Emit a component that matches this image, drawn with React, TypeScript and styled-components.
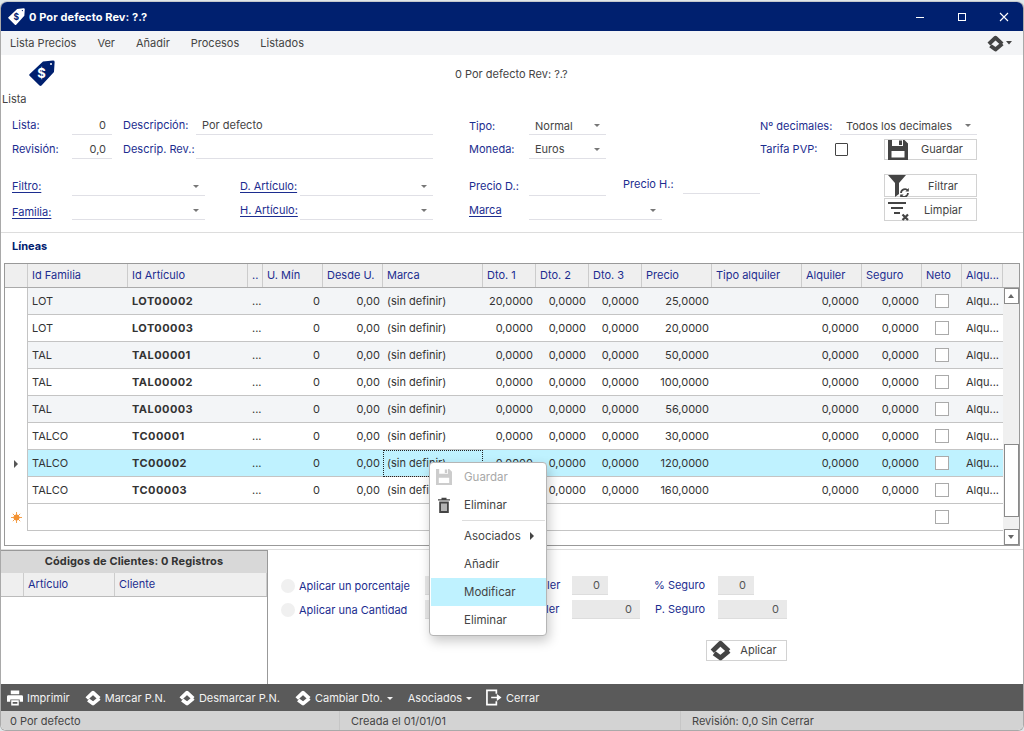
import React from "react";
import styled, { createGlobalStyle } from "styled-components";

const Global = createGlobalStyle`
  html, body { margin: 0; padding: 0; background: #dfe7ea; }
  body { font-family: Inter, "Liberation Sans", sans-serif; font-size: 11px; color: #444; overflow: hidden; }
  * { box-sizing: border-box; }
`;

const NAVY = "#00206f";
const LINK = "#1c2d8f";

const Win = styled.div`
  margin-top: 1px; width: 1024px; height: 730px; display: flex; flex-direction: column;
  background: #fff; border: 1px solid #a9a9a9; border-top: 1px solid #c4c8cc; border-radius: 7px 7px 6px 6px; overflow: hidden; position: relative;
`;
const TitleBar = styled.div`
  height: 29px; flex: none; background: ${NAVY}; color: #fff; display: flex; align-items: center; padding-left: 7px;
`;
const TitleText = styled.div`font-weight: 700; font-size: 11px; margin-left: 4px; letter-spacing: .1px; flex: 1;`;
const WinBtns = styled.div`display: flex; align-items: center; gap: 26px; padding-right: 11px;`;
const MenuBar = styled.div`
  height: 24px; flex: none; background: #f3f4f6; display: flex; align-items: center; padding: 0 11px 0 9px; gap: 21px; color: #444;
`;
const MenuLogo = styled.div`margin-left: auto; display: flex; align-items: center; gap: 2px; color: #444;`;
const Head = styled.div`height: 52px; flex: none; display: flex;`;
const HeadLeft = styled.div`width: 454px; padding-left: 1px;`;
const HeadIcon = styled.div`margin: 5px 0 6px 27px; height: 26px; line-height: 0;`;
const HeadText = styled.div`margin-top: 12px; line-height: 14px;`;
const FormWrap = styled.div`
  height: 126px; flex: none; display: flex; padding: 4px 0 0 11px; border-bottom: 1px solid #ddd;
`;
const Col = styled.div<{ $w: number }>`width: ${p => p.$w}px; flex: none; display: flex; flex-direction: column;`;
const Row = styled.div<{ $gap?: number; $h?: number; $dy?: number }>`
  height: ${p => p.$h ?? 24}px; display: flex; align-items: flex-end; margin-top: ${p => p.$gap ?? 0}px;
  --dy: ${p => p.$dy ?? 0}px;
  --lh: ${p => (p.$dy ? 19 : 20)}px;
`;
const Label = styled.div<{ $w: number; $ml?: number; $up?: number }>`
  width: ${p => p.$w}px; margin-left: ${p => p.$ml ?? 0}px; height: 20px; line-height: var(--lh, 20px); flex: none; color: ${LINK}; white-space: nowrap;
  margin-bottom: ${p => p.$up ?? 0}px; padding-top: var(--dy, 0);
`;
const LinkText = styled.span`text-decoration: underline; text-underline-offset: 2px;`;
const Input = styled.div<{ $w: number; $right?: boolean; $up?: number }>`
  width: ${p => p.$w}px; height: 20px; line-height: 19px; flex: none; border-bottom: 1px solid #e0e0e6; padding: var(--dy, 0) 6px 0;
  text-align: ${p => (p.$right ? "right" : "left")}; margin-bottom: ${p => p.$up ?? 0}px; color: #444;
`;
const Combo = styled(Input)`position: relative; padding-right: 16px;`;
const Caret = styled.span`
  position: absolute; right: 6px; top: 9px; width: 0; height: 0; border-left: 3px solid transparent; border-right: 3px solid transparent; border-top: 3px solid #777;
`;
const Check = styled.span`display: block; width: 13px; height: 13px; border: 1px solid #444; margin: 0 0 4px 0; border-radius: 1px; flex: none;`;
const Btn = styled.div<{ $w: number; $ml?: number; $h?: number }>`
  width: ${p => p.$w}px; height: ${p => p.$h ?? 23}px; margin-left: ${p => p.$ml ?? 0}px; border: 1px solid #d2d2d2; display: flex; align-items: center; flex: none;
  padding-left: 3px; color: #444; background: #fff; svg { flex: none; }
  span { flex: 1; text-align: center; padding-bottom: ${p => (p.$h ? 1 : 0)}px; }
`;
const BtnStack = styled.div`margin: 14px 0 0 124px; display: flex; flex-direction: column; gap: 1px;`;
const SectionHead = styled.div`height: 30px; flex: none; padding: 6px 0 0 11px; font-weight: 700; color: ${NAVY}; line-height: 14px;`;
const GridBox = styled.div`
  margin: 0 3px; flex: none; height: 283px; border: 1px solid #999; display: flex; flex-direction: column;
`;
const COLS = "23px 100px 120px 15px 60px 60px 100px 53px 53px 53px 70px 90px 60px 60px 40px 41px";
const GridHead = styled.div`
  height: 24px; flex: none; display: grid; grid-template-columns: ${COLS} 1fr; background: #efefef; border-bottom: 1px solid #aaa;
`;
const HCell = styled.div`border-right: 1px solid #ccc; padding: 0 0 0 4px; line-height: 22px; color: ${LINK}; white-space: nowrap; overflow: hidden;`;
const HEnd = styled.div``;
const GridBody = styled.div`flex: 1; display: flex; min-height: 0;`;
const Table = styled.div`width: 998px; flex: none;`;
const TRow = styled.div`display: grid; grid-template-columns: ${COLS}; height: 27px;`;
const Ind = styled.div`border-right: 1px solid #c4c4c4; display: flex; align-items: center; justify-content: center; padding-left: 0;`;
const Arrow = styled.span`width: 0; height: 0; border-top: 4px solid transparent; border-bottom: 4px solid transparent; border-left: 4px solid #555; margin-left: 0;`;
const Cell = styled.div<{ $bg: string; $right?: boolean; $bold?: boolean; $focus?: boolean; $center?: boolean }>`
  background: ${p => p.$bg}; border-bottom: 1px solid #c4c4c4; padding: 0 ${p => (p.$right ? 3 : 4)}px 0 4px; line-height: 26px; color: #333; white-space: nowrap; overflow: hidden;
  text-align: ${p => (p.$right ? "right" : "left")}; font-weight: ${p => (p.$bold ? 700 : 400)}; letter-spacing: ${p => (p.$bold ? ".45px" : "0")};
  ${p => p.$focus ? "outline: 1px dotted #222; outline-offset: -1px;" : ""}
  ${p => p.$center ? "display: flex; align-items: center; justify-content: center;" : ""}
`;
const CellBox = styled.span`display: block; width: 14px; height: 14px; border: 1px solid #aaa; background: #fff;`;
const Scroll = styled.div`flex: 1; background: #f0f0f0; display: flex; flex-direction: column; align-items: center; padding: 0 0 0 0;`;
const SBtn = styled.div`width: 15px; height: 16px; border: 1px solid #8a8a8a; background: #fff; display: flex; align-items: center; justify-content: center; flex: none;`;
const STri = styled.span<{ $down?: boolean }>`
  width: 0; height: 0; border-left: 3px solid transparent; border-right: 3px solid transparent;
  ${p => p.$down ? "border-top: 4px solid #666;" : "border-bottom: 4px solid #666;"}
`;
const Thumb = styled.div`width: 15px; height: 73px; border: 1px solid #8a8a8a; background: #fff; margin-top: 140px; flex: none;`;
const SpacerEnd = styled.div`flex: 1;`;
const Bottom = styled.div`
  margin-top: 3px; height: 135px; flex: none; border-top: 1px solid #ddd; display: flex;
`;
const ClientPanel = styled.div`width: 267px; flex: none; border-right: 1px solid #999; border-top: 1px solid #999; display: flex; flex-direction: column;`;
const ClientTitle = styled.div`height: 22px; flex: none; background: #d8d8d8; text-align: center; line-height: 21px; font-weight: 700; color: #333; letter-spacing: .12px;`;
const ClientHead = styled.div`height: 24px; flex: none; background: #efefef; border-bottom: 1px solid #bbb; display: grid; grid-template-columns: 23px 91px 1fr;`;
const Apply = styled.div`flex: 1; padding: 26px 0 0 13px;`;
const ApplyRow = styled.div`display: flex; align-items: center; height: 19px; margin-bottom: 5px;`;
const Radio = styled.span`width: 14px; height: 14px; border-radius: 50%; background: #f0f0f0; flex: none; margin-right: 4px;`;
const ApplyLabel = styled.div<{ $w: number; $ml?: number; $low?: boolean }>`
  width: ${p => p.$w}px; margin-left: ${p => p.$ml ?? 0}px; flex: none; color: ${LINK}; white-space: nowrap;
  padding: ${p => (p.$low ? "1px 0 0" : "0 0 2px")};
`;
const GrayInput = styled.div<{ $w: number }>`
  width: ${p => p.$w}px; height: 19px; flex: none; background: #e9e9e9; border-bottom: 1px solid #ddd; text-align: right; padding-right: 8px; line-height: 18px; color: #555;
`;
const ApplyBtnRow = styled.div`margin: 21px 0 0 425px;`;
const Toolbar = styled.div`
  height: 27px; flex: none; background: #5a5a5a; display: flex; align-items: center; padding-left: 6px; color: #f2f2f2;
`;
const Tool = styled.div<{ $ml?: number }>`display: flex; align-items: center; gap: 4px; margin-left: ${p => p.$ml ?? 0}px; flex: none;`;
const TCaret = styled.span`display: inline-block; margin-left: 4px; vertical-align: 2px; width: 0; height: 0; border-left: 3px solid transparent; border-right: 3px solid transparent; border-top: 3px solid #f2f2f2;`;
const Status = styled.div`
  flex: 1; background: #d3d3d3; display: grid; grid-template-columns: 339px 341px 1fr; line-height: 20px; color: #444; border-bottom: 1px solid #999;
`;
const SCell = styled.div<{ $pad: number }>`padding-left: ${p => p.$pad}px; border-right: 1px solid #c6c6c6; &:last-child { border-right: 0; }`;
const Popup = styled.div`
  position: absolute; left: 428px; top: 460px; width: 118px; height: 174px; background: #fff; border: 1px solid #b5b5b5; border-radius: 4px;
  box-shadow: 2px 5px 12px rgba(0,0,0,.22); font-size: 11.5px; color: #444;
`;
const PopItem = styled.div<{ $on?: boolean; $off?: boolean }>`
  height: 28px; display: flex; align-items: center; padding-left: 33px; position: relative; margin-left: 1px;
  background: ${p => (p.$on ? "#bff2ff" : "transparent")}; color: ${p => (p.$off ? "#a8a8a8" : "#444")};
`;
const PopIcon = styled.span`position: absolute; left: 5px; top: 6px; line-height: 0;`;
const PopSep = styled.div`height: 1px; background: #ddd; margin: 1px 1px 1px 32px;`;
const SubArrow = styled.span`position: absolute; right: 12px; top: 10px; width: 0; height: 0; border-top: 4px solid transparent; border-bottom: 4px solid transparent; border-left: 4px solid #444;`;

const Tag: React.FC<{ size: number; fill: string; ink: string }> = ({ size, fill, ink }) => (
  <svg width={size} height={size} viewBox="0 0 26 26">
    <path d="M14 1.5 L24 0.5 Q26 0.5 25.6 2.5 L25 12 L12.5 25.5 Q11.5 26.3 10.5 25.5 L0.6 15.8 Q-.2 15 .7 14 Z" fill={fill} />
    <circle cx="22" cy="4" r="1" fill={ink} />
    <text x="12.5" y="18" textAnchor="middle" fontSize="13" fontWeight="700" fontFamily="Inter, sans-serif" fill={ink}>$</text>
  </svg>
);
const Logo: React.FC<{ size?: number; color?: string }> = ({ size = 16, color = "#444" }) => (
  <svg width={size} height={size} viewBox="0 0 20 20">
    <path d="M2.2 10.6 L10 3.2 L17.8 10.4" fill="none" stroke={color} strokeWidth="4.6" strokeLinejoin="round" />
    <path d="M4 12.6 L10 17 L18 10.4" fill="none" stroke={color} strokeWidth="4.6" strokeLinejoin="round" />
  </svg>
);
const Floppy: React.FC<{ size: number; color: string }> = ({ size, color }) => (
  <svg width={size} height={size} viewBox="0 0 20 20">
    <path fillRule="evenodd" fill={color} d="M0 0H4V6H15V0H16.5L20 3.5V20H0ZM3.5 11V17.5H16.5V11ZM11 0.5H14V5H11Z" />
  </svg>
);
const FilterRefresh = () => (
  <svg width="22" height="22" viewBox="0 0 22 22">
    <path d="M0 0H18L11 8V19L7 22V8Z" fill="#444" />
    <path d="M13 18a4 4 0 0 1 7-2.5M20 18a4 4 0 0 1-7 2.5" fill="none" stroke="#444" strokeWidth="1.8" />
    <path d="M20.8 13v3.6h-3.4zM12.2 23v-3.6h3.4z" fill="#444" />
  </svg>
);
const FilterClear = () => (
  <svg width="22" height="22" viewBox="0 0 22 22">
    <path d="M0 3H18V5H0ZM3 8H15V10H3ZM6 13H12V15H6Z" fill="#444" />
    <path d="M14.5 15.5 L20 21 M20 15.5 L14.5 21" stroke="#444" strokeWidth="2.2" />
  </svg>
);
const Trash = () => (
  <svg width="16" height="16" viewBox="0 0 16 16">
    <path d="M2 2.2H5.5V0.8H10.5V2.2H14V3.6H2Z" fill="#444" />
    <path fillRule="evenodd" d="M3.2 4.6H12.8V16H3.2ZM5.4 6.4V14H6.6V6.4ZM7.4 6.4V14H8.6V6.4ZM9.4 6.4V14H10.6V6.4Z" fill="#444" />
  </svg>
);
const Printer = () => (
  <svg width="16" height="16" viewBox="0 0 17 16">
    <path d="M4 0H13V4H4Z" fill="#fff" />
    <path fillRule="evenodd" d="M1.5 5H15.5Q17 5 17 6.5V12H13.5V9.5H3.5V12H0V6.5Q0 5 1.5 5Z" fill="#fff" />
    <path fillRule="evenodd" d="M4.5 10.5H12.5V16H4.5ZM6 12.2V14H11V12.2Z" fill="#fff" />
  </svg>
);
const ExitIcon = () => (
  <svg width="16" height="17" viewBox="0 0 17 17">
    <path d="M11 4.5V1H1V16H11V12.5" fill="none" stroke="#fff" strokeWidth="1.8" />
    <path d="M5.5 7.6H11.5V4.8L16.5 8.5L11.5 12.2V9.4H5.5Z" fill="#fff" />
  </svg>
);

const headers = ["", "Id Familia", "Id Artículo", "..", "U. Mín", "Desde U.", "Marca", "Dto. 1", "Dto. 2", "Dto. 3", "Precio", "Tipo alquiler", "Alquiler", "Seguro", "Neto", "Alqu..."];
const rows = [
  ["LOT", "LOT00002", "20,0000", "25,0000"],
  ["LOT", "LOT00003", "0,0000", "20,0000"],
  ["TAL", "TAL00001", "0,0000", "50,0000"],
  ["TAL", "TAL00002", "0,0000", "100,0000"],
  ["TAL", "TAL00003", "0,0000", "56,0000"],
  ["TALCO", "TC00001", "0,0000", "30,0000"],
  ["TALCO", "TC00002", "0,0000", "120,0000"],
  ["TALCO", "TC00003", "0,0000", "160,0000"],
];

const bgFor = (i: number) => (i === 6 ? "#bff2ff" : i % 2 === 0 && i < 6 ? "#f3f5f7" : "#fff");

export default function App() {
  return (
    <>
      <Global />
      <Win>
        <TitleBar>
          <Tag size={17} fill="#fff" ink={NAVY} />
          <TitleText>0 Por defecto Rev: ?.?</TitleText>
          <WinBtns>
            <svg width="16" height="16" viewBox="0 0 16 16"><path d="M4 8.5H12" stroke="#fff" strokeWidth="1" /></svg>
            <svg width="16" height="16" viewBox="0 0 16 16"><rect x="4.5" y="4.5" width="7" height="7" fill="none" stroke="#fff" /></svg>
            <svg width="16" height="16" viewBox="0 0 16 16"><path d="M4 4L12 12M12 4L4 12" stroke="#fff" strokeWidth="1.1" /></svg>
          </WinBtns>
        </TitleBar>
        <MenuBar>
          <span>Lista Precios</span><span>Ver</span><span>Añadir</span><span>Procesos</span><span>Listados</span>
          <MenuLogo>
            <Logo size={17} />
            <svg width="6" height="4" viewBox="0 0 6 4"><path d="M0 0H6L3 3.5Z" fill="#444" /></svg>
          </MenuLogo>
        </MenuBar>
        <Head>
          <HeadLeft>
            <HeadIcon><Tag size={26} fill={NAVY} ink="#fff" /></HeadIcon>
            <div>Lista</div>
          </HeadLeft>
          <HeadText>0 Por defecto Rev: ?.?</HeadText>
        </Head>
        <FormWrap>
          <Col $w={457}>
            <Row $dy={1}>
              <Label $w={60}>Lista:</Label><Input $w={40} $right>0</Input>
              <Label $w={73} $ml={11}>Descripción:</Label><Input $w={237}>Por defecto</Input>
            </Row>
            <Row $dy={1}>
              <Label $w={60}>Revisión:</Label><Input $w={40} $right>0,0</Input>
              <Label $w={73} $ml={11}>Descrip. Rev.:</Label><Input $w={237} />
            </Row>
            <Row $gap={13}>
              <Label $w={60}><LinkText>Filtro:</LinkText></Label><Combo $w={133}><Caret /></Combo>
              <Label $w={60} $ml={35}><LinkText>D. Artículo:</LinkText></Label><Combo $w={133}><Caret /></Combo>
            </Row>
            <Row>
              <Label $w={60} $up={-2}><LinkText>Familia:</LinkText></Label><Combo $w={133}><Caret /></Combo>
              <Label $w={60} $ml={35}><LinkText>H. Artículo:</LinkText></Label><Combo $w={133}><Caret /></Combo>
            </Row>
          </Col>
          <Col $w={291}>
            <Row $dy={2}>
              <Label $w={60}>Tipo:</Label><Combo $w={77}>Normal<Caret /></Combo>
            </Row>
            <Row $dy={1}>
              <Label $w={60}>Moneda:</Label><Combo $w={77}>Euros<Caret /></Combo>
            </Row>
            <Row $gap={13}>
              <Label $w={60}>Precio D.:</Label><Input $w={77} />
              <Label $w={60} $ml={17} $up={2}>Precio H.:</Label><Input $w={77} $up={2} />
            </Row>
            <Row>
              <Label $w={60}><LinkText>Marca</LinkText></Label><Combo $w={133}><Caret /></Combo>
            </Row>
          </Col>
          <Col $w={217}>
            <Row $dy={2}>
              <Label $w={80}>Nº decimales:</Label><Combo $w={137}>Todos los decimales<Caret /></Combo>
            </Row>
            <Row $h={25}>
              <Label $w={75} $up={1}>Tarifa PVP:</Label><Check />
              <Btn $w={93} $ml={36} $h={21}><Floppy size={20} color="#444" /><span>Guardar</span></Btn>
            </Row>
            <BtnStack>
              <Btn $w={93}><FilterRefresh /><span>Filtrar</span></Btn>
              <Btn $w={93}><FilterClear /><span>Limpiar</span></Btn>
            </BtnStack>
          </Col>
        </FormWrap>
        <SectionHead>Líneas</SectionHead>
        <GridBox>
          <GridHead>
            {headers.map((h, i) => <HCell key={i}>{h}</HCell>)}
            <HEnd />
          </GridHead>
          <GridBody>
            <Table>
              {rows.map((r, i) => {
                const bg = bgFor(i);
                return (
                  <TRow key={r[1]}>
                    <Ind>{i === 6 && <Arrow />}</Ind>
                    <Cell $bg={bg}>{r[0]}</Cell>
                    <Cell $bg={bg} $bold>{r[1]}</Cell>
                    <Cell $bg={bg}>...</Cell>
                    <Cell $bg={bg} $right>0</Cell>
                    <Cell $bg={bg} $right>0,00</Cell>
                    <Cell $bg={bg} $focus={i === 6}>(sin definir)</Cell>
                    <Cell $bg={bg} $right>{r[2]}</Cell>
                    <Cell $bg={bg} $right>0,0000</Cell>
                    <Cell $bg={bg} $right>0,0000</Cell>
                    <Cell $bg={bg} $right>{r[3]}</Cell>
                    <Cell $bg={bg} />
                    <Cell $bg={bg} $right>0,0000</Cell>
                    <Cell $bg={bg} $right>0,0000</Cell>
                    <Cell $bg={bg} $center><CellBox /></Cell>
                    <Cell $bg={bg}>Alqu...</Cell>
                  </TRow>
                );
              })}
              <TRow>
                <Ind>
                  <svg width="11" height="11" viewBox="0 0 11 11">
                    <path d="M5.5 0V11M0 5.5H11M1.8 1.8L9.2 9.2M9.2 1.8L1.8 9.2" stroke="#f5a04a" strokeWidth="1" />
                    <circle cx="5.5" cy="5.5" r="3" fill="#f39233" />
                  </svg>
                </Ind>
                {headers.slice(1).map((_, i) => (
                  <Cell key={i} $bg="#fff" $center={i === 13}>{i === 13 && <CellBox />}</Cell>
                ))}
              </TRow>
            </Table>
            <Scroll>
              <SBtn><STri /></SBtn>
              <Thumb />
              <SpacerEnd />
              <SBtn><STri $down /></SBtn>
            </Scroll>
          </GridBody>
        </GridBox>
        <Bottom>
          <ClientPanel>
            <ClientTitle>Códigos de Clientes: 0 Registros</ClientTitle>
            <ClientHead>
              <HCell />
              <HCell>Artículo</HCell>
              <HCell>Cliente</HCell>
            </ClientHead>
          </ClientPanel>
          <Apply>
            <ApplyRow>
              <Radio /><ApplyLabel $w={126} $low>Aplicar un porcentaje</ApplyLabel>
              <GrayInput $w={70} />
              <ApplyLabel $w={65} $ml={12}>% Alquiler</ApplyLabel>
              <GrayInput $w={36}>0</GrayInput>
              <ApplyLabel $w={64} $ml={46}>% Seguro</ApplyLabel>
              <GrayInput $w={36}>0</GrayInput>
            </ApplyRow>
            <ApplyRow>
              <Radio /><ApplyLabel $w={126} $low>Aplicar una Cantidad</ApplyLabel>
              <GrayInput $w={70} />
              <ApplyLabel $w={65} $ml={12}>P. Alquiler</ApplyLabel>
              <GrayInput $w={68}>0</GrayInput>
              <ApplyLabel $w={63} $ml={15}>P. Seguro</ApplyLabel>
              <GrayInput $w={69}>0</GrayInput>
            </ApplyRow>
            <ApplyBtnRow>
              <Btn $w={81} $h={21}><Logo size={21} /><span>Aplicar</span></Btn>
            </ApplyBtnRow>
          </Apply>
        </Bottom>
        <Toolbar>
          <Tool><Printer />Imprimir</Tool>
          <Tool $ml={15}><Logo size={16} color="#fff" />Marcar P.N.</Tool>
          <Tool $ml={13}><Logo size={16} color="#fff" />Desmarcar P.N.</Tool>
          <Tool $ml={15}><Logo size={16} color="#fff" /><span>Cambiar Dto.<TCaret /></span></Tool>
          <Tool $ml={15}><span>Asociados<TCaret /></span></Tool>
          <Tool $ml={14}><ExitIcon />Cerrar</Tool>
        </Toolbar>
        <Status>
          <SCell $pad={9}>0 Por defecto</SCell>
          <SCell $pad={11}>Creada el 01/01/01</SCell>
          <SCell $pad={11}>Revisión: 0,0 Sin Cerrar</SCell>
        </Status>
        <Popup>
          <PopItem $off><PopIcon><Floppy size={16} color="#ccc" /></PopIcon>Guardar</PopItem>
          <PopItem><PopIcon><Trash /></PopIcon>Eliminar</PopItem>
          <PopSep />
          <PopItem>Asociados<SubArrow /></PopItem>
          <PopItem>Añadir</PopItem>
          <PopItem $on>Modificar</PopItem>
          <PopItem>Eliminar</PopItem>
        </Popup>
      </Win>
    </>
  );
}
